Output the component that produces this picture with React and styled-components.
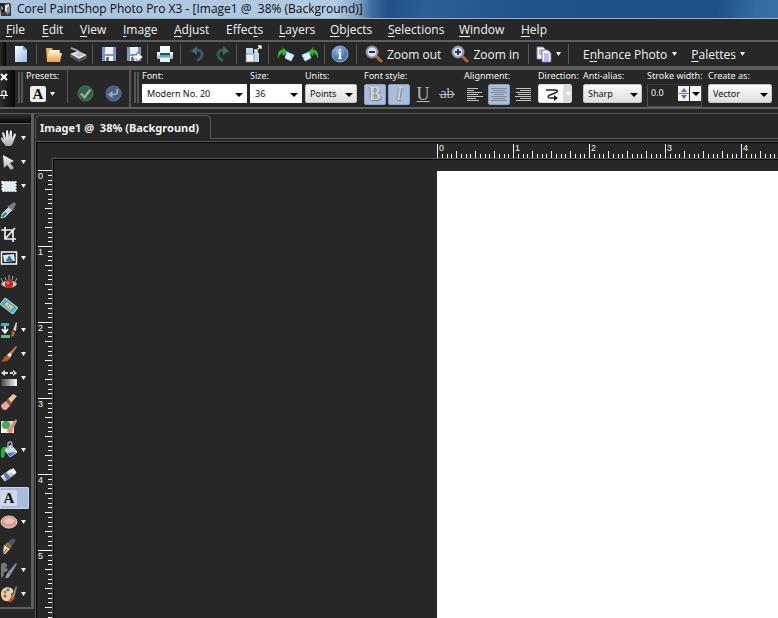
import React, { useEffect, useState } from 'react';
import styled, { createGlobalStyle } from 'styled-components';

const C = {
  bg: '#272727', line: '#5e5e5e', thin: '#585858', sel: '#a9bddb', text: '#f2f2f2',
};

const Global = createGlobalStyle`
  * { box-sizing: border-box; }
  html, body, #root { margin: 0; height: 100%; }
  body { background: ${C.bg}; overflow: hidden; font-family: "Open Sans", "Noto Sans", sans-serif; font-size: 12px; color: ${C.text}; }
  button, select, input { font: inherit; color: inherit; border: 0; padding: 0; margin: 0; background: none; border-radius: 0; }
  svg { display: block; flex: none; }
`;

const Shell = styled.div`
  display: flex; flex-direction: column; height: 100vh; overflow: hidden;
`;
const TitleBar = styled.header`
  display: flex; align-items: center; gap: 5px; flex: none; height: 19px;
  border-bottom: 1px solid #8fb4d6; color: #0c0c0c; white-space: pre;
  background:
    linear-gradient(90deg, #a9c3de 0, #b3cae2 335px, #87a5c6 358px, #3f6fa5 371px, transparent 388px),
    linear-gradient(100deg, #23508a 0, #23508a 50%, #2b6097 55%, #22528a 68%, #205088 92%, #356ca4 97%, #386fa6 100%);
  h1 { margin: 0; font-size: 12px; font-weight: 400; line-height: 18px; }
`;
const MenuBar = styled.nav`
  display: flex; align-items: center; flex: none; height: 21px; padding-left: 6px;
`;
const MenuItem = styled.button`
  flex: none; width: ${p => p.$w}px; text-align: left; line-height: 20px; white-space: nowrap;
  u { text-underline-offset: 2px; }
`;
const ToolBar = styled.div`
  display: flex; align-items: center; flex: none; height: 30px; overflow: hidden;
  border-top: 2px solid ${C.line}; border-bottom: 4px solid ${C.line};
`;
const DarkGrip = styled.div`
  flex: none; width: 6px; height: 24px; background: linear-gradient(90deg, #2c2c2c, #050505);
`;
const Cell = styled.div`
  display: flex; align-items: center; flex: none; width: ${p => p.$w}px; height: 20px;
  padding-left: ${p => p.$pad || 8}px; gap: ${p => p.$gap || 8}px;
  border-right: ${p => (p.$last ? '0' : `1px solid ${C.thin}`)};
`;
const ToolButton = styled.button`
  display: flex; align-items: center; gap: ${p => p.$gap || 5}px; flex: none; height: 20px; white-space: nowrap;
  u { text-underline-offset: 2px; }
`;
const Options = styled.div`
  display: flex; flex: none; height: 39px; overflow: hidden; border-bottom: 2px solid ${C.line};
  font-family: "Noto Sans", "Open Sans", sans-serif; font-size: 9px;
`;
const OptionsGrip = styled.div`
  display: flex; flex-direction: column; align-items: flex-start; gap: 8px; flex: none;
  width: 15px; padding: 3px 0 0 0; background: linear-gradient(90deg, #2e2e2e, #080808);
  button { display: block; }
`;
const Grips = styled.div`
  flex: none; width: 5px; margin: 2px 3px 4px 3px;
  border: solid #555; border-width: 0 2px;
`;
const Presets = styled.div`
  flex: none; width: 42px; border-right: 1px solid ${C.thin}; margin-bottom: 4px;
`;
const Label = styled.label`
  display: block; height: 12px; line-height: 12px; white-space: nowrap; margin-bottom: 2px;
`;
const Row = styled.div`
  display: flex; align-items: center; height: 20px; gap: ${p => p.$gap || 0}px; padding-left: ${p => p.$pad || 0}px;
`;
const Applies = styled.div`
  display: flex; align-items: center; gap: 11px; flex: none; width: 63px; padding: 9px 0 0 9px;
  border-right: 2px solid ${C.thin};
`;
const Field = styled.div`
  flex: none; width: ${p => p.$w}px; margin-right: 3px;
`;
const SelectBox = styled.div`
  position: relative; width: ${p => p.$w}px; height: 19px;
  select {
    appearance: none; width: 100%; height: 100%; padding-left: 4px; color: #101010; outline: none;
    background: ${p => (p.$flat ? '#fff' : 'linear-gradient(#fafafa, #dedede)')};
    border: 1px solid ${p => (p.$flat ? '#fff' : '#c4c4c4')}; border-radius: ${p => (p.$flat ? 0 : 2)}px;
  }
  svg { position: absolute; right: 4px; top: 9px; pointer-events: none; }
`;
const Toggle = styled.button`
  display: flex; align-items: center; justify-content: center; flex: none; width: 22px; height: 21px;
  font-family: "Liberation Serif", serif; font-size: 18px; line-height: 19px; color: #b9b9b9; border-radius: 2px;
  ${p => p.$on && `background: ${C.sel}; border: 1px solid #86a0c6; color: #d6d6d2; text-shadow: 1px 1px 0 #7d8592, -1px 0 0 #8c949f;`}
`;
const Direction = styled.button`
  display: flex; align-items: center; justify-content: space-between; width: 34px; height: 19px;
  padding-left: 6px; background: linear-gradient(90deg, #fff 0 24px, #dcdcdc 24px); border: 1px solid #ddd; border-radius: 2px;
`;
const Stroke = styled.div`
  display: flex; align-items: flex-start; width: 55px; height: 23px; border: 1px solid #4e4e4e; border-top-color: #3a3a3a;
  input { width: 29px; height: 15px; padding-left: 3px; outline: none; }
`;
const Spin = styled.button`
  width: 12px; height: 15px; margin: 1px 0 0 1px; background: #f2f2f2; display: flex; align-items: center; justify-content: center;
`;
const Gap = styled.div`
  flex: none; height: 5px; border-bottom: 1px solid ${C.thin};
`;
const Work = styled.main`
  display: flex; flex: 1; min-height: 0;
`;
const ToolBox = styled.aside`
  flex: none; align-self: flex-start; width: 34px;
  border-right: 3px solid ${C.line}; border-bottom: 2px solid ${C.line};
`;
const ToolHead = styled.div`
  height: 10px; margin-bottom: 3px; border-bottom: 1px solid ${C.thin}; background: linear-gradient(#303030, #070707);
`;
const Tool = styled.button`
  display: flex; align-items: center; gap: 3px; width: 29px; height: 22px; margin: 1px 0 2px; border-radius: 0 2px 2px 0;
  ${p => p.$on && `background: ${C.sel}; box-shadow: inset 0 0 0 1px #c8d6ea;`}
`;
const Doc = styled.section`
  display: flex; flex-direction: column; flex: 1; min-width: 0; padding-left: 1px;
`;
const Tabs = styled.div`
  display: flex; flex: none; height: 25px; padding-top: 1px;
  &::after { content: ''; flex: 1; border-bottom: 1px solid ${C.thin}; }
`;
const Tab = styled.button`
  width: 176px; padding-left: 4px; text-align: left; white-space: pre; line-height: 22px;
  font-family: "Noto Sans", sans-serif; font-size: 11px; font-weight: 700;
  border: 1px solid ${C.thin}; border-bottom: 0; border-radius: 5px 5px 0 0;
`;
const Frame = styled.div`
  display: grid; grid-template: 16px minmax(0, 1fr) / 16px minmax(0, 1fr); flex: 1; min-height: 0; margin-top: 2px;
  border: solid ${C.thin}; border-width: 1px 0 0 1px; box-shadow: inset 1px 1px 0 #000; padding: 1px 0 0 1px;
`;
const RulerTop = styled.div`
  grid-column: 2; min-width: 0;
`;
const RulerSide = styled.div`
  min-height: 0;
`;
const RulerSvg = styled.svg`
  overflow: visible;
`;
const Canvas = styled.div`
  display: flex; border: solid ${C.thin}; border-width: 1px 0 0 1px; box-shadow: inset 1px 1px 0 #000;
  padding: 12px 0 0 384px; margin: -1px 0 0 -1px;
`;
const Page = styled.div`
  flex: 1; background: #fff;
`;
const RulerText = styled.text`
  font: 9px "Liberation Sans", sans-serif; fill: #f4f4f4;
`;

const Caret = ({ color = '#f4f4f4', size = 5 }) => (
  <svg width={size} height="4" viewBox="0 0 7 4" preserveAspectRatio="none"><path d="M0 0h7L3.5 4z" fill={color} /></svg>
);
const Svg = ({ w = 18, h = 18, children }) => (
  <svg width={w} height={h} viewBox="0 0 18 18" fill="none" aria-hidden="true">{children}</svg>
);

const Defs = () => (
  <svg width="0" height="0" aria-hidden="true">
    <defs>
      <linearGradient id="paper" x1="0" y1="0" x2="1" y2="1"><stop stopColor="#fff" /><stop offset="1" stopColor="#94b8ea" /></linearGradient>
      <linearGradient id="silver" x1="0" y1="0" x2="0" y2="1"><stop stopColor="#fff" /><stop offset="1" stopColor="#a3a7ac" /></linearGradient>
      <linearGradient id="folder" x1="0" y1="0" x2="0" y2="1"><stop stopColor="#ffe5af" /><stop offset="1" stopColor="#e6a04d" /></linearGradient>
      <linearGradient id="fade" x1="0" y1="0" x2="1" y2="0"><stop stopColor="#444" /><stop offset="1" stopColor="#fff" /></linearGradient>
      <radialGradient id="blueBall" cx=".4" cy=".3"><stop stopColor="#9cbbe6" /><stop offset="1" stopColor="#4a76b8" /></radialGradient>
    </defs>
  </svg>
);

const AppIcon = () => (
  <svg width="12" height="18" viewBox="0 0 12 18" aria-hidden="true">
    <path d="M0 3h10l1 2v11H1z" fill="#3c3c3c" /><path d="M0 4h4v8H1z" fill="#161616" />
    <path d="M5 5l4-1v3l-2 1v5l-2-2z" fill="#ddd" /><path d="M7 9l3-3v6l-3 3z" fill="#8e8e8e" /><path d="M1 5l2 3-1 3z" fill="#ccc" />
  </svg>
);
const NewIcon = () => <Svg><path d="M3 1h8l4 4v12H3z" fill="url(#paper)" /><path d="M11 1v4h4z" fill="#7da3d8" /></Svg>;
const OpenIcon = () => <Svg><path d="M1 3h6l1 2h7v11H2z" fill="#e9ad60" /><path d="M4 5h10v5H4z" fill="#fff0cb" /><path d="M3 8h14l-2 9H2z" fill="url(#folder)" /></Svg>;
const ScanIcon = () => <Svg><path d="M1 9l8-3 9 4-8 4z" fill="#ececec" /><path d="M1 9v3l9 5 8-4v-3l-8 4z" fill="#555" /><path d="M5 9l6-1 3 2-4 2z" fill="#9cc0e0" /><path d="M2 3l5 2 8 5" stroke="#bbb" strokeWidth="1.500" /></Svg>;
const Disk = () => <><path d="M2 2h14v14H2z" fill="#7c95cc" /><path d="M5 2h8v7H5z" fill="#edf3fc" /><path d="M5 11h8v5H5z" fill="#fff" /><path d="M6 12h3v4H6z" fill="#5b71a6" /></>;
const SaveIcon = () => <Svg><Disk /></Svg>;
const ExportIcon = () => <Svg><Disk /><path d="M8 10h4V7l6 5-6 5v-3H8z" fill="#fff" stroke="#31456b" strokeWidth=".6" /></Svg>;
const PrintIcon = () => <Svg><path d="M4 1h10v7H4z" fill="#f2faff" /><path d="M1 7h16v7H1z" fill="url(#silver)" /><path d="M4 8h10v3H4z" fill="#444" /><path d="M4 10h10v2H4z" fill="#2dc1cc" /><path d="M4 13h10v4H4z" fill="#e4f2fb" /></Svg>;
const UndoIcon = () => <Svg><path d="M6 5c9-1 9 7 2 11" stroke="#33596c" strokeWidth="3" /><path d="M2 6l6-5v9z" fill="#3d687d" /></Svg>;
const RedoIcon = () => <Svg><path d="M12 5C3 4 3 12 10 16" stroke="#315e52" strokeWidth="3" /><path d="M16 6l-6-5v9z" fill="#3a705f" /></Svg>;
const ResizeIcon = () => <Svg><path d="M1 3h13v14H1z" fill="#b9dbf0" /><path d="M1 9h8v8H1z" fill="#f0f0f0" stroke="#777" strokeWidth=".7" /><path d="M8 0h10v8H8z" fill="#222" /><path d="M10 7l6-6M13 1h3v3M10 4v3h3" stroke="#fff" strokeWidth="1.300" /></Svg>;
const RotateLeft = () => <Svg><path d="M1 14C0 7 3 4 6 5l-1-3 6 5-5 4V8C4 8 2 10 1 14z" fill="#31b52e" /><path d="M10 7l7 3-3 6-6-3z" fill="#e0f6ff" stroke="#8fc9ea" /></Svg>;
const RotateRight = () => <Svg><path d="M17 14c1-7-2-10-5-9l1-3-6 5 5 4V8c2 0 4 2 5 6z" fill="#31b52e" /><path d="M8 7l-7 3 3 6 6-3z" fill="#e0f6ff" stroke="#8fc9ea" /></Svg>;
const InfoIcon = () => <Svg><circle cx="9" cy="9" r="8" fill="url(#blueBall)" stroke="#8fafd9" /><path d="M8 4h2v2H8zM7 7h3v6h1v1H7v-1h1V8H7z" fill="#fff" /></Svg>;
const ZoomIcon = ({ plus }) => <Svg><path d="M11 11l5 5" stroke="#b8672e" strokeWidth="3" strokeLinecap="round" /><circle cx="7" cy="7" r="5.500" fill="#d7e6f7" stroke="#8c9199" strokeWidth="2" /><path d={plus ? 'M4 7h6M7 4v6' : 'M4 7h6'} stroke="#193a6c" strokeWidth="2" /></Svg>;
const CopyIcon = () => <Svg><path d="M2 2h6l3 3v9H2z" fill="#fff" stroke="#8080c8" /><path d="M4 5h3M4 7h3M4 9h3" stroke="#7676cc" /><path d="M7 5h6l3 3v9H7z" fill="#fff" stroke="#6666bb" /><path d="M9 9h5M9 11h5M9 13h5M9 15h5" stroke="#7676cc" /></Svg>;

const LetterA = () => (
  <Svg>
    <rect x="1" y="1" width="16" height="16" rx="2" fill="#eee" />
    <text x="9" y="14" textAnchor="middle" fontFamily="Liberation Serif, serif" fontSize="15" fontWeight="700" fill="#111">A</text>
  </Svg>
);
const PlainA = () => (
  <Svg>
    <rect x="1" y="1" width="16" height="16" rx="2" fill="#cfd9e8" />
    <text x="9" y="14" textAnchor="middle" fontFamily="Liberation Serif, serif" fontSize="15" fontWeight="700" fill="#111">A</text>
  </Svg>
);

const tools = [
  ['Pan', 1, <path d="M6 17C3 14 1 11 1 9c1-1 2 0 3 2L2 4c1-1 2-1 2 0l2 5V2c1-1 2-1 2 0l1 6 1-6c1-1 2 0 2 1v6l2-4c1-1 2 0 2 1l-3 8-2 3z" fill="url(#silver)" />],
  ['Pick', 1, <path d="M3 2l11 6-4 2 4 5-3 2-4-5-3 3z" fill="url(#silver)" />],
  ['Selection', 1, <rect x="2.500" y="5" width="13" height="9" fill="#dcecff" stroke="#fff" strokeWidth="2" strokeDasharray="2 1" />],
  ['Dropper', 0, <><path d="M1 17l1-4 7-7 3 3-7 7z" fill="#b4cfd8" stroke="#e2f1f1" strokeWidth=".7" /><path d="M7 5l3-1 4-3 2 2-2 4-1 3z" fill="#777d85" /><path d="M2 16l4-4" stroke="#35795d" strokeWidth="2" /></>],
  ['Crop', 0, <path d="M5 2v12h11M1 5h12v12M5 14L15 3" stroke="#eee" strokeWidth="1.700" />],
  ['Straighten', 1, <><rect x="1.500" y="3" width="15" height="12" fill="#222" stroke="#fff" strokeWidth="1.500" /><path d="M3 6l11-1 1 7-11 1z" fill="#d2e8f5" /><path d="M6 12c0-2 1-2 2-3 0-3 3-2 3 0s2 1 2 3z" fill="#2f74b1" /></>],
  ['Red Eye', 0, <><path d="M1 11c4-5 12-5 16 0-3 5-12 5-16 0z" fill="#d8c5c0" /><circle cx="9" cy="11" r="4" fill="#c2271c" /><circle cx="8" cy="10" r="1.300" fill="#ff978b" /><path d="M3 9L1 5M6 7L5 4M9 7V2M12 7l1-4M15 9l2-4" stroke="#a5a5a5" /></>],
  ['Makeover', 0, <g transform="rotate(38 9 9)"><rect x="1" y="5" width="16" height="8" rx="1" fill="#50aabd" stroke="#b4e4ed" /><rect x="5" y="7" width="8" height="4" fill="#e6c999" /><path d="M7 8h1v1H7zM10 9h1v1h-1z" fill="#9c6a3d" /></g>],
  ['Clone', 1, <><path d="M1 2h8v3H1z" fill="#4aacbc" /><path d="M1 14h9v3H1z" fill="#62bb91" /><path d="M5 5v6M2 8l3 4 3-4" stroke="#fff" strokeWidth="1.600" /><path d="M11 16l1-6 3 1-1 4z" fill="#b4662b" /><path d="M13 9l3-8 1 1-1 8z" fill="#e4d1ac" /></>],
  ['Paint Brush', 1, <><path d="M1 16c3-1 3-5 6-6l3 3c-2 4-6 4-9 3z" fill="#bc5520" /><path d="M7 10l3-3 2 2-2 4z" fill="#dedede" /><path d="M10 7l6-6 1 1-5 7z" fill="#c77b48" /></>],
  ['Lighten', 1, <><path d="M1 10h16v7H1z" fill="url(#fade)" /><path d="M5 1v6L1 4zM4 3h4v2H4zM13 1v6l4-3zM10 3h4v2h-4z" fill="#ddd" /></>],
  ['Eraser', 0, <><path d="M8 6l5-5 4 2-6 7z" fill="#e7c993" /><path d="M6 8l2-2 4 4-2 3z" fill="#935b34" /><path d="M1 12l5-4 4 5-4 4c-3 0-5-2-5-5z" fill="#eca3a3" /></>],
  ['Background Eraser', 0, <><path d="M1 4h13v12H1z" fill="#c5e1f8" /><path d="M1 11l5-3 8 5v3H1z" fill="#eff7e4" /><circle cx="6" cy="8" r="4" fill="#56a457" /><path d="M10 9l6-7 1 2-4 8z" fill="#c79860" /><circle cx="10" cy="13" r="3" fill="#dc8a8a" /></>],
  ['Flood Fill', 1, <><path d="M1 10c0-4 3-5 6-4v3c-3 0-1 6-4 8-3-1-2-4-2-7z" fill="#27b13a" /><path d="M5 9l6-5 6 7-7 5z" fill="#cfdcf5" stroke="#fff" /><path d="M7 12l9-1-6 5z" fill="#4e79cb" /><path d="M8 8V2c2-2 4-1 4 1v4" stroke="#9aa8bb" strokeWidth="1.500" /></>],
  ['Color Changer', 0, <g transform="rotate(-35 9 9)"><path d="M1 6h11l4 1v5l-4 1H1z" fill="url(#silver)" /><path d="M4 6h4v7H4z" fill="#5e79bb" /><ellipse cx="14" cy="9.500" rx="2" ry="3" fill="#f4f4f4" /></g>],
  ['Text', 0, null],
  ['Preset Shape', 1, <><ellipse cx="9" cy="9" rx="8" ry="6" fill="#d89c91" stroke="#f0cbc2" /><ellipse cx="9" cy="8" rx="5" ry="3" fill="#ecc3b9" /></>],
  ['Pen', 0, <><path d="M3 17l1-9 6 4-5 5z" fill="#f0dfb4" /><path d="M3 17l4-5" stroke="#443322" /><path d="M4 8l4-3 4 4-2 3z" fill="#8d704b" /><path d="M8 5l5-4 3 2-4 6z" fill="#51565e" /></>],
  ['Oil Brush', 1, <><path d="M1 3c4-3 8 0 5 4 4 1 1 5-3 4 2 2 0 5-2 6z" fill="#777" /><path d="M5 17l3-6 3 2-3 4z" fill="#9e9e9e" /><path d="M8 11l8-9 1 1-6 10z" fill="#8790a3" /></>],
  ['Art Media', 1, <><path d="M1 9c0-5 5-8 10-6 4 2 2 5 0 6 2 3-1 8-5 7-3 0-5-3-5-7z" fill="#edcfa4" /><circle cx="5" cy="7" r="1.500" fill="#559b50" /><circle cx="8" cy="5" r="1.400" fill="#3f72bd" /><circle cx="5" cy="11" r="1.500" fill="#c8442f" /><path d="M8 17l3-5 3 2-3 3z" fill="#bd5232" /><path d="M11 12l5-11 1 1-3 12z" fill="#af7659" /></>],
];

const menus = [['F', 'ile', 36], ['E', 'dit', 38], ['V', 'iew', 43], ['I', 'mage', 51], ['A', 'djust', 52], ['Effec', 't', 53, 's'], ['L', 'ayers', 51], ['O', 'bjects', 58], ['S', 'elections', 71], ['W', 'indow', 62], ['H', 'elp', 32]];

const useWindowSize = () => {
  const read = () => ({ width: window.innerWidth, height: window.innerHeight });
  const [size, setSize] = useState(read);
  useEffect(() => {
    const update = () => setSize(read());
    window.addEventListener('resize', update);
    return () => window.removeEventListener('resize', update);
  }, []);
  return size;
};

// One inch is 76 px at this zoom, split into sixteenths.
const Ruler = ({ vertical, origin, length }) => {
  let ticks = '';
  const labels = [];
  for (let i = 0; origin + i * 4.75 < length; i += 1) {
    const at = origin + Math.round(i * 4.75);
    const len = i % 16 === 0 ? 14 : i % 4 === 0 ? 7 : 4;
    ticks += vertical ? `M${15 - len} ${at}h${len}v1h-${len}z` : `M${at} ${15 - len}v${len}h1v-${len}z`;
    if (i % 16 === 0 && at + 12 < length) labels.push([i / 16, at]);
  }
  return (
    <RulerSvg width={vertical ? 16 : '100%'} height={vertical ? '100%' : 16} shapeRendering="crispEdges" aria-hidden="true">
      <path d={ticks} fill="#f4f4f4" />
      {labels.map(([n, at]) => <RulerText key={n} x={vertical ? 1 : at + 2} y={vertical ? at + 9 : 8}>{n}</RulerText>)}
    </RulerSvg>
  );
};

const Picker = ({ id, label, value, w, cell, flat }) => (
  <Field $w={cell || w}>
    <Label htmlFor={id}>{label}</Label>
    <SelectBox $w={w} $flat={flat}>
      <select id={id} defaultValue={value}><option>{value}</option></select>
      <Caret color="#000" size={8} />
    </SelectBox>
  </Field>
);
const Lines = ({ widths, align, color = '#c5c5c5' }) => (
  <svg width="16" height="15" viewBox="0 0 16 15" aria-hidden="true">
    <path stroke={color} d={widths.map((w, i) => `M${align === 'r' ? 16 - w : align === 'c' ? (16 - w) / 2 : 0} ${i * 2 + 1.5}h${w}`).join('')} />
  </svg>
);
const B = ({ name, children }) => <ToolButton aria-label={name}>{children}</ToolButton>;

export default function App() {
  const { width, height } = useWindowSize();
  return (
    <Shell>
      <Global />
      <TitleBar><AppIcon /><h1>{'Corel PaintShop Photo Pro X3 - [Image1 @  38% (Background)]'}</h1></TitleBar>
      <MenuBar>
        {menus.map(([a, b, w, c]) => (
          <MenuItem key={a} $w={w}>{c ? <>{a}<u>{b}</u>{c}</> : <><u>{a}</u>{b}</>}</MenuItem>
        ))}
      </MenuBar>
      <ToolBar>
        <DarkGrip />
        <Cell $w={31} $pad={6}><B name="New"><NewIcon /></B></Cell>
        <Cell $w={56} $gap={6}><B name="Open"><OpenIcon /></B><B name="Scan"><ScanIcon /></B></Cell>
        <Cell $w={55} $pad={7} $gap={7}><B name="Save"><SaveIcon /></B><B name="Save as"><ExportIcon /></B></Cell>
        <Cell $w={33}><B name="Print"><PrintIcon /></B></Cell>
        <Cell $w={56} $gap={6}><B name="Undo"><UndoIcon /></B><B name="Redo"><RedoIcon /></B></Cell>
        <Cell $w={32}><B name="Resize"><ResizeIcon /></B></Cell>
        <Cell $w={56} $gap={6}><B name="Rotate left"><RotateLeft /></B><B name="Rotate right"><RotateRight /></B></Cell>
        <Cell $w={32} $pad={6}><B name="Info"><InfoIcon /></B></Cell>
        <Cell $w={172} $gap={10}><ToolButton $gap={4}><ZoomIcon />Zoom out</ToolButton><ToolButton $gap={4}><ZoomIcon plus />Zoom in</ToolButton></Cell>
        <Cell $w={40} $pad={6}><ToolButton $gap={3} aria-label="Copy"><CopyIcon /><Caret /></ToolButton></Cell>
        <Cell $w={200} $pad={14} $gap={14} $last>
          <ToolButton><span>E<u>n</u>hance Photo</span><Caret /></ToolButton>
          <ToolButton $gap={4}><span><u>P</u>alettes</span><Caret /></ToolButton>
        </Cell>
      </ToolBar>
      <Options>
        <OptionsGrip>
          <button aria-label="Close"><svg width="9" height="9" viewBox="0 0 9 9"><path d="M1 1l6 6M7 1L1 7" stroke="#fff" strokeWidth="2" /></svg></button>
          <button aria-label="Pin"><svg width="9" height="9" viewBox="0 0 9 9" fill="none"><path d="M2 5V1h4v4M0 5.500h8M4 6v3M5.500 1v4" stroke="#fff" /></svg></button>
        </OptionsGrip>
        <Grips />
        <Presets>
          <Label as="span">Presets:</Label>
          <Row $pad={3}><ToolButton $gap={3} aria-label="Preset"><LetterA /><Caret /></ToolButton></Row>
        </Presets>
        <Applies>
          <B name="Apply"><Svg w={17} h={17}><circle cx="9" cy="9" r="8" fill="#2d6542" stroke="#4e7d62" /><path d="M4 9l4 4 6-8" stroke="#a5a5a5" strokeWidth="2.500" /></Svg></B>
          <B name="Reset"><Svg w={17} h={17}><circle cx="9" cy="9" r="8" fill="#41628e" stroke="#60799c" /><path d="M13 4v4c0 2-2 2-6 2" stroke="#a5a5a5" strokeWidth="2" /><path d="M3 10l5-4v8z" fill="#a5a5a5" /></Svg></B>
        </Applies>
        <Grips />
        <Picker id="font" label="Font:" value="Modern No. 20" w={105} flat />
        <Picker id="size" label="Size:" value="36" w={52} flat />
        <Picker id="units" label="Units:" value="Points" w={52} cell={56} />
        <Field $w={97}>
          <Label as="span">Font style:</Label>
          <Row $gap={2}>
            <Toggle $on aria-label="Bold"><b>B</b></Toggle><Toggle $on aria-label="Italic"><i>I</i></Toggle>
            <Toggle aria-label="Underline"><u>U</u></Toggle><Toggle aria-label="Strikethrough"><Svg><text x="9" y="13" textAnchor="middle" fontFamily="Liberation Serif, serif" fontSize="15" fill="#b9b9b9">ab</text><path d="M1 9.500h16" stroke="#b9b9b9" /></Svg></Toggle>
          </Row>
        </Field>
        <Field $w={71}>
          <Label as="span">Alignment:</Label>
          <Row $gap={2}>
            <Toggle aria-label="Align left"><Lines widths={[11, 7, 15, 11, 16, 9, 12]} /></Toggle>
            <Toggle $on aria-label="Align center"><Lines align="c" color="#84888f" widths={[16, 12, 16, 10, 16, 12, 16]} /></Toggle>
            <Toggle aria-label="Align right"><Lines align="r" widths={[15, 11, 15, 13, 16, 11, 15]} /></Toggle>
          </Row>
        </Field>
        <Field $w={42}>
          <Label as="span">Direction:</Label>
          <Direction aria-label="Direction"><svg width="14" height="14" viewBox="0 0 14 14" fill="none"><path d="M1 3h9c3 0 3 2 0 3L5 8c-3 1-2 3 0 3h6" stroke="#222" strokeWidth="1.500" /><path d="M9 8l4 3-4 3z" fill="#222" /></svg><Caret color="#fff" /></Direction>
        </Field>
        <Picker id="aa" label="Anti-alias:" value="Sharp" w={59} cell={61} />
        <Field $w={58}>
          <Label htmlFor="stroke">Stroke width:</Label>
          <Stroke>
            <input id="stroke" defaultValue="0.0" />
            <Spin aria-label="Step"><svg width="10" height="13" viewBox="0 0 10 13"><path d="M5 1l3 4H2zM5 12l3-4H2z" fill="#5a68bd" /><path d="M0 6.500h10" stroke="#777" /></svg></Spin>
            <Spin aria-label="Slider"><Caret color="#000" size={8} /></Spin>
          </Stroke>
        </Field>
        <Picker id="create" label="Create as:" value="Vector" w={64} />
      </Options>
      <Gap />
      <Work>
        <ToolBox>
          <ToolHead />
          {tools.map(([name, menu, art]) => (
            <Tool key={name} aria-label={name} $on={name === 'Text'}>
              {art ? <Svg>{art}</Svg> : <PlainA />}{menu ? <Caret /> : null}
            </Tool>
          ))}
        </ToolBox>
        <Doc>
          <Tabs><Tab>{'Image1 @  38% (Background)'}</Tab></Tabs>
          <Frame>
            <RulerTop><Ruler origin={384} length={width - 53} /></RulerTop>
            <RulerSide><Ruler vertical origin={11} length={height - 159} /></RulerSide>
            <Canvas><Page /></Canvas>
          </Frame>
        </Doc>
      </Work>
      <Defs />
    </Shell>
  );
}
